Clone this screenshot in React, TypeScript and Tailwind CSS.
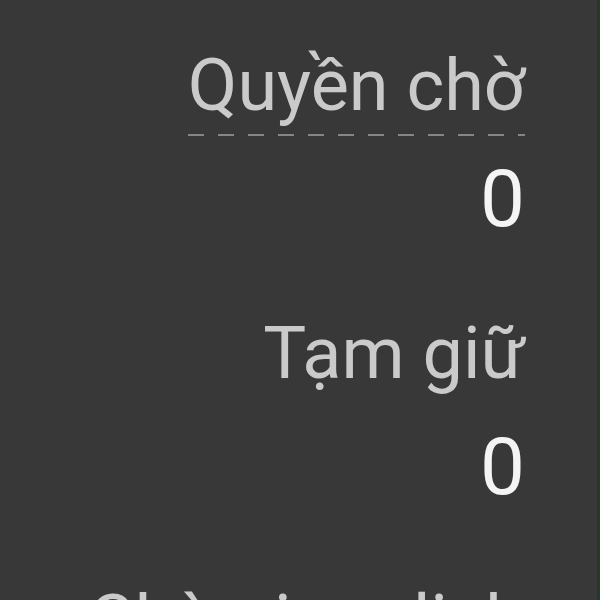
const items = [
  { label: 'Quyền chờ', value: '0', dashed: true },
  { label: 'Tạm giữ', value: '0', dashed: false },
  { label: 'Chờ giao dịch', value: '0', dashed: false },
];

export default function App() {
  return (
    <div
      className="flex h-[600px] w-[600px] overflow-hidden bg-[#383838]"
      style={{ fontFamily: 'Roboto, "Noto Sans", sans-serif' }}
    >
      <div className="flex flex-1 flex-col items-end pt-[41px] pr-[72px]">
        {items.map((item) => (
          <div key={item.label} className="flex flex-col items-end pb-[60px]">
            <div className="flex flex-col items-end">
              <span className="whitespace-nowrap text-[72px] leading-[90px] text-[#cacaca]">
                {item.label}
              </span>
              {item.dashed ? (
                <div className="mt-[3px] h-[2px] w-full bg-[repeating-linear-gradient(to_right,#858585_0_16px,transparent_16px_30px)]" />
              ) : (
                <div className="mt-[5px]" />
              )}
            </div>
            <span className="mt-[13px] text-[80px] leading-[100px] text-[#f4f4f4]">
              {item.value}
            </span>
          </div>
        ))}
      </div>
      <div className="h-full w-[3px] bg-[#253a25]" />
    </div>
  );
}
